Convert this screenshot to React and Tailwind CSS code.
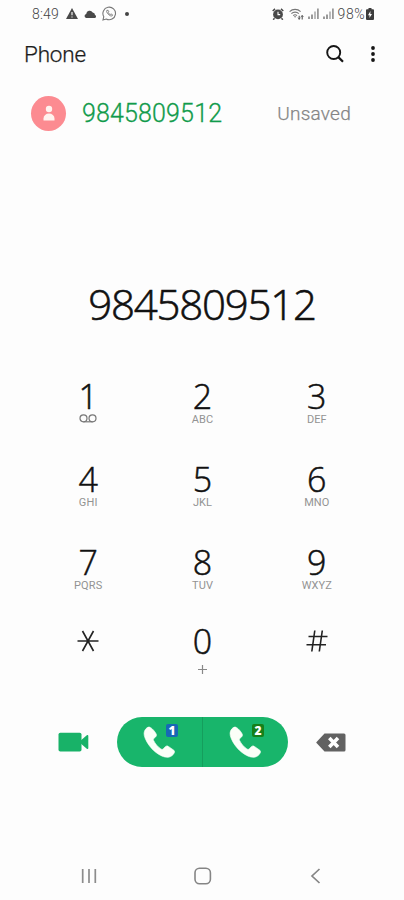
const keys = [
  { digit: "1", voicemail: true },
  { digit: "2", label: "ABC" },
  { digit: "3", label: "DEF" },
  { digit: "4", label: "GHI" },
  { digit: "5", label: "JKL" },
  { digit: "6", label: "MNO" },
  { digit: "7", label: "PQRS" },
  { digit: "8", label: "TUV" },
  { digit: "9", label: "WXYZ" },
];

function StatusBar() {
  return (
    <div className="h-[27px] pl-8 pr-[30px] flex items-center justify-between text-[14px] leading-none">
      <div className="flex items-center">
        <span className="w-[34px] font-light tracking-[0.2px] text-[#444]">8:49</span>
        <svg className="w-3 h-[11px]" viewBox="0 0 12 11">
          <path d="M6 0L12 11H0Z" fill="#494949" />
          <path d="M6 4v3.3M6 8.4v1.2" stroke="#fff" strokeWidth="1.1" />
        </svg>
        <svg className="w-[13px] h-2 ml-[6px]" viewBox="0 0 13 8">
          <path d="M2.2 8a2.1 2.1 0 0 1 0-4.1A3.5 3.5 0 0 1 8.7 2.5 2.6 2.6 0 0 1 11 5a1.6 1.6 0 0 1 0 3Z" fill="#494949" />
        </svg>
        <svg className="w-[15px] h-[15px] ml-[5px]" viewBox="0 0 15 15" fill="none" stroke="#777">
          <path d="M1 14l.8-3.3A6.3 6.3 0 1 1 4.2 13Z" strokeWidth="1.1" />
          <path d="M4.8 4.4c-.5 1.1.2 2.5 1.4 3.8 1.4 1.4 2.9 2.2 4 1.6l.4-1-1.6-.9-.8.7C7.2 8.2 6.6 7.5 6.2 6.7l.6-.9-.7-1.5Z" strokeWidth="0.9" />
        </svg>
        <span className="w-1 h-1 ml-[8px] rounded-full bg-[#444]" />
      </div>
      <div className="flex items-center">
        <svg className="w-[12px] h-[12px]" viewBox="0 0 12 12" fill="none">
          <circle cx="6" cy="6.4" r="4.9" fill="#494949" />
          <path d="M.7 3L3 .9M11.3 3L9 .9M2.5 10.3L1.2 11.7M9.5 10.3l1.3 1.4" stroke="#494949" strokeWidth="1.5" />
          <path d="M6 3.8v2.8h2.2" stroke="#fff" strokeWidth="1.1" />
        </svg>
        <svg className="w-[15px] h-3 ml-[5px]" viewBox="0 0 15 12" fill="none" stroke="#777" strokeWidth="1.1">
          <path d="M.6 3.6a8 8 0 0 1 11 0M2.4 5.6a5.3 5.3 0 0 1 7.4 0M4.2 7.6a2.8 2.8 0 0 1 3.8 0" />
          <path d="M6.1 9.8L4.8 8.2h2.6Z" fill="#777" stroke="none" />
          <path d="M10.2 7.8v3.6M13.2 7.4v4" stroke="#555" />
          <path d="M9 9.6l1.2 1.6 1.2-1.6M12 9l1.2-1.6L14.4 9" stroke="#555" strokeWidth="0.8" />
        </svg>
        <Signal className="ml-[4px]" />
        <Signal className="ml-[4px]" />
        <span className="ml-[4px] font-light tracking-[0.5px] text-[#444]">98%</span>
        <svg className="w-2 h-3 ml-[1px]" viewBox="0 0 8 12">
          <path d="M2.5 0h3v1.2H7a1 1 0 0 1 1 1V11a1 1 0 0 1-1 1H1a1 1 0 0 1-1-1V2.2a1 1 0 0 1 1-1h1.5Z" fill="#3c3c3c" />
          <path d="M4.5 3L2 7.2h1.6L3.4 10 6 6H4.3Z" fill="#fff" />
        </svg>
      </div>
    </div>
  );
}

function Signal({ className }) {
  return (
    <svg className={`w-[11px] h-[11px] ${className}`} viewBox="0 0 11 11">
      <path d="M0 8.5h2V11H0zM3 6.5h2V11H3z" fill="#999" />
      <path d="M6 3.5h2V11H6z" fill="#bbb" />
      <path d="M9 .5h1.8V11H9z" fill="#999" />
    </svg>
  );
}

function Header() {
  return (
    <header className="h-[54px] pl-[24px] pr-[26px] flex items-center justify-between">
      <h1 className="text-[22.5px] leading-none font-light tracking-[-0.2px] text-[#1c1c1c] [-webkit-text-stroke:0.25px_#1c1c1c]">Phone</h1>
      <div className="flex items-center gap-[24px]">
        <svg className="w-[18px] h-[18px]" viewBox="0 0 18 18" fill="none" stroke="#161616">
          <circle cx="7.7" cy="7.5" r="6.5" strokeWidth="1.9" />
          <path d="M12.3 12.1L17 16.8" strokeWidth="2.2" />
        </svg>
        <svg className="w-[10px] h-4" viewBox="0 0 10 16" fill="#161616">
          <circle cx="5" cy="2" r="1.9" />
          <circle cx="5" cy="8" r="1.9" />
          <circle cx="5" cy="14" r="1.9" />
        </svg>
      </div>
    </header>
  );
}

function ContactRow() {
  return (
    <div className="h-[64px] pl-[31px] pr-[53px] flex items-center">
      <div className="w-[35px] h-[35px] rounded-full bg-[#fc8b91] flex items-center justify-center">
        <svg className="w-3 h-[17px]" viewBox="0 0 12 17" fill="#fff3ef">
          <circle cx="6" cy="4" r="3.2" />
          <path d="M.5 15.5V13.5a5.5 5 0 0 1 11 0v2Z" />
        </svg>
      </div>
      <span className="ml-[16px] pt-px text-[25px] leading-none font-light tracking-[0.15px] text-[#119b4b] [-webkit-text-stroke:0.3px_#119b4b]">9845809512</span>
      <span className="ml-auto pt-px text-[19px] leading-none font-light tracking-[0.25px] text-[#858585] [-webkit-text-stroke:0.25px_#858585]">Unsaved</span>
    </div>
  );
}

function Digit({ children }) {
  return (
    <span className="font-['Open_Sans','Noto_Sans',sans-serif] text-[34px] leading-[35px] text-[#111] [-webkit-text-stroke:0.5px_#111]">
      {children}
    </span>
  );
}

function Key({ digit, label, voicemail }) {
  return (
    <button className="h-[83px] flex flex-col items-center">
      <Digit>{digit}</Digit>
      {voicemail ? (
        <svg className="w-[18px] h-[9px]" viewBox="0 0 18 9" fill="none" stroke="#777" strokeWidth="1.2">
          <circle cx="4.5" cy="4.3" r="3.5" />
          <circle cx="13.5" cy="4.3" r="3.5" />
          <path d="M4.5 7.8h9" />
        </svg>
      ) : (
        <span className="text-[11px] leading-[12px] tracking-[0.1px] font-normal text-[#939393]">{label}</span>
      )}
    </button>
  );
}

function Keypad() {
  return (
    <div className="pl-[31px] pr-[30px] grid grid-cols-3 font-light">
      {keys.map((key) => (
        <Key key={key.digit} {...key} />
      ))}
      <button className="h-[85px] pt-[2px] flex justify-center">
        <svg className="w-[22px] h-[22px]" viewBox="0 0 22 22" stroke="#222" strokeWidth="1.6">
          <path d="M.5 11h21M5.5 1l11 20M16.5 1L5.5 21" />
        </svg>
      </button>
      <button className="h-[85px] flex flex-col items-center">
        <span className="-mt-1">
          <Digit>0</Digit>
        </span>
        <svg className="w-[9px] h-[9px] mt-[4px]" viewBox="0 0 9 9" stroke="#888" strokeWidth="1.2">
          <path d="M0 4.5h9M4.5 0v9" />
        </svg>
      </button>
      <button className="h-[85px] pt-[2px] flex justify-center">
        <svg className="w-[22px] h-[22px]" viewBox="0 0 22 22" stroke="#222" strokeWidth="1.6">
          <path d="M2.5 6.5h19M.5 14.8h19.5M8.8.5l-3 21M16.3.5l-3 21" />
        </svg>
      </button>
    </div>
  );
}

function CallButton({ sim, badge }) {
  return (
    <button className="relative flex-1 flex items-center pl-[26px]">
      <svg className="w-[32px] h-[32px]" viewBox="0 0 32 32" fill="#fbfff8" stroke="#fbfff8" strokeWidth="0.6">
        <path d="M7.300 1.400C5.900.6 4.300 1.200 2.900 2.800.7 5.200.5 8.300 2.100 12.200c1.900 4.800 5.600 10 10.200 13.700 4.400 3.600 9.200 5.700 12.900 5.400 2.500-.2 5.300-2.300 6.200-4.700.4-1.100 0-2-.9-2.600l-5.100-3.600c-1.100-.8-2.200-.6-3.100.3l-2 2.100c-.7.7-1.500.7-2.400.1-3-2-5.700-5.100-7.300-8.500-.4-.9-.2-1.600.5-2.200l1.500-1.300c1-.9 1.100-2 .5-3.100-1.300-2.300-3.400-5.100-5.800-6.400Z" />
      </svg>
      <span className={`absolute top-[7px] left-[49px] w-[12px] h-[13px] rounded-[2px] font-['Open_Sans',sans-serif] text-[12px] leading-[13px] font-extrabold text-white text-center ${badge}`}>
        {sim}
      </span>
    </button>
  );
}

function CallBar() {
  return (
    <div className="h-[50px] px-[58px] flex items-center">
      <svg className="w-[31px] h-5" viewBox="0 0 31 20" fill="#18b268">
        <rect x="0.5" y="0.8" width="23" height="18.7" rx="1.8" />
        <path d="M23 8.2l5.800-5c.7-.5 1.500-.3 1.500.5v12.600c0 .8-.8 1-1.500.5L23 11.800Z" />
      </svg>
      <div className="w-[171px] h-[50px] ml-[28px] rounded-full bg-[#18b56b] flex overflow-hidden">
        <CallButton sim="1" badge="bg-[#1768b5]" />
        <div className="w-px bg-[#159e5d]" />
        <CallButton sim="2" badge="bg-[#168019]" />
      </div>
      <svg className="w-[30px] h-[19px] ml-auto" viewBox="0 0 30 19">
        <path d="M8.5.5H28a1.5 1.5 0 0 1 1.5 1.5v15a1.5 1.5 0 0 1-1.5 1.5H8.5L.8 10.3a1 1 0 0 1 0-1.6Z" fill="#626262" />
        <path d="M13.3 5l8.7 9M22 5l-8.700 9" stroke="#fff" strokeWidth="3.5" />
      </svg>
    </div>
  );
}

function NavBar() {
  return (
    <nav className="pl-[81px] pr-[82px] flex items-center justify-between">
      <svg className="w-4 h-[16px]" viewBox="0 0 16 16" stroke="#8c8c8c" strokeWidth="1.7">
        <path d="M1.7 1v14M8 1v14M14.3 1v14" />
      </svg>
      <svg className="w-[18px] h-[18px]" viewBox="0 0 18 18" fill="none" stroke="#858585" strokeWidth="1.6">
        <rect x="1" y="1.3" width="15.4" height="15.4" rx="4.5" />
      </svg>
      <svg className="w-[14px] h-4" viewBox="0 0 14 16" fill="none" stroke="#858585" strokeWidth="1.7">
        <path d="M11.5 1L4 8l7.500 7" />
      </svg>
    </nav>
  );
}

export default function App() {
  return (
    <div className="w-[404px] h-[900px] bg-[#fdfdfd] font-['Roboto',sans-serif] flex flex-col overflow-hidden">
      <StatusBar />
      <Header />
      <ContactRow />
      <div className="h-[234px] pt-[134px] text-center font-['Open_Sans','Noto_Sans',sans-serif] font-light text-[42px] leading-[50px] tracking-[-1.2px] text-[#111] [-webkit-text-stroke:0.6px_#111]">
        9845809512
      </div>
      <Keypad />
      <div className="mt-[4px]">
        <CallBar />
      </div>
      <div className="mt-[100px]">
        <NavBar />
      </div>
    </div>
  );
}
